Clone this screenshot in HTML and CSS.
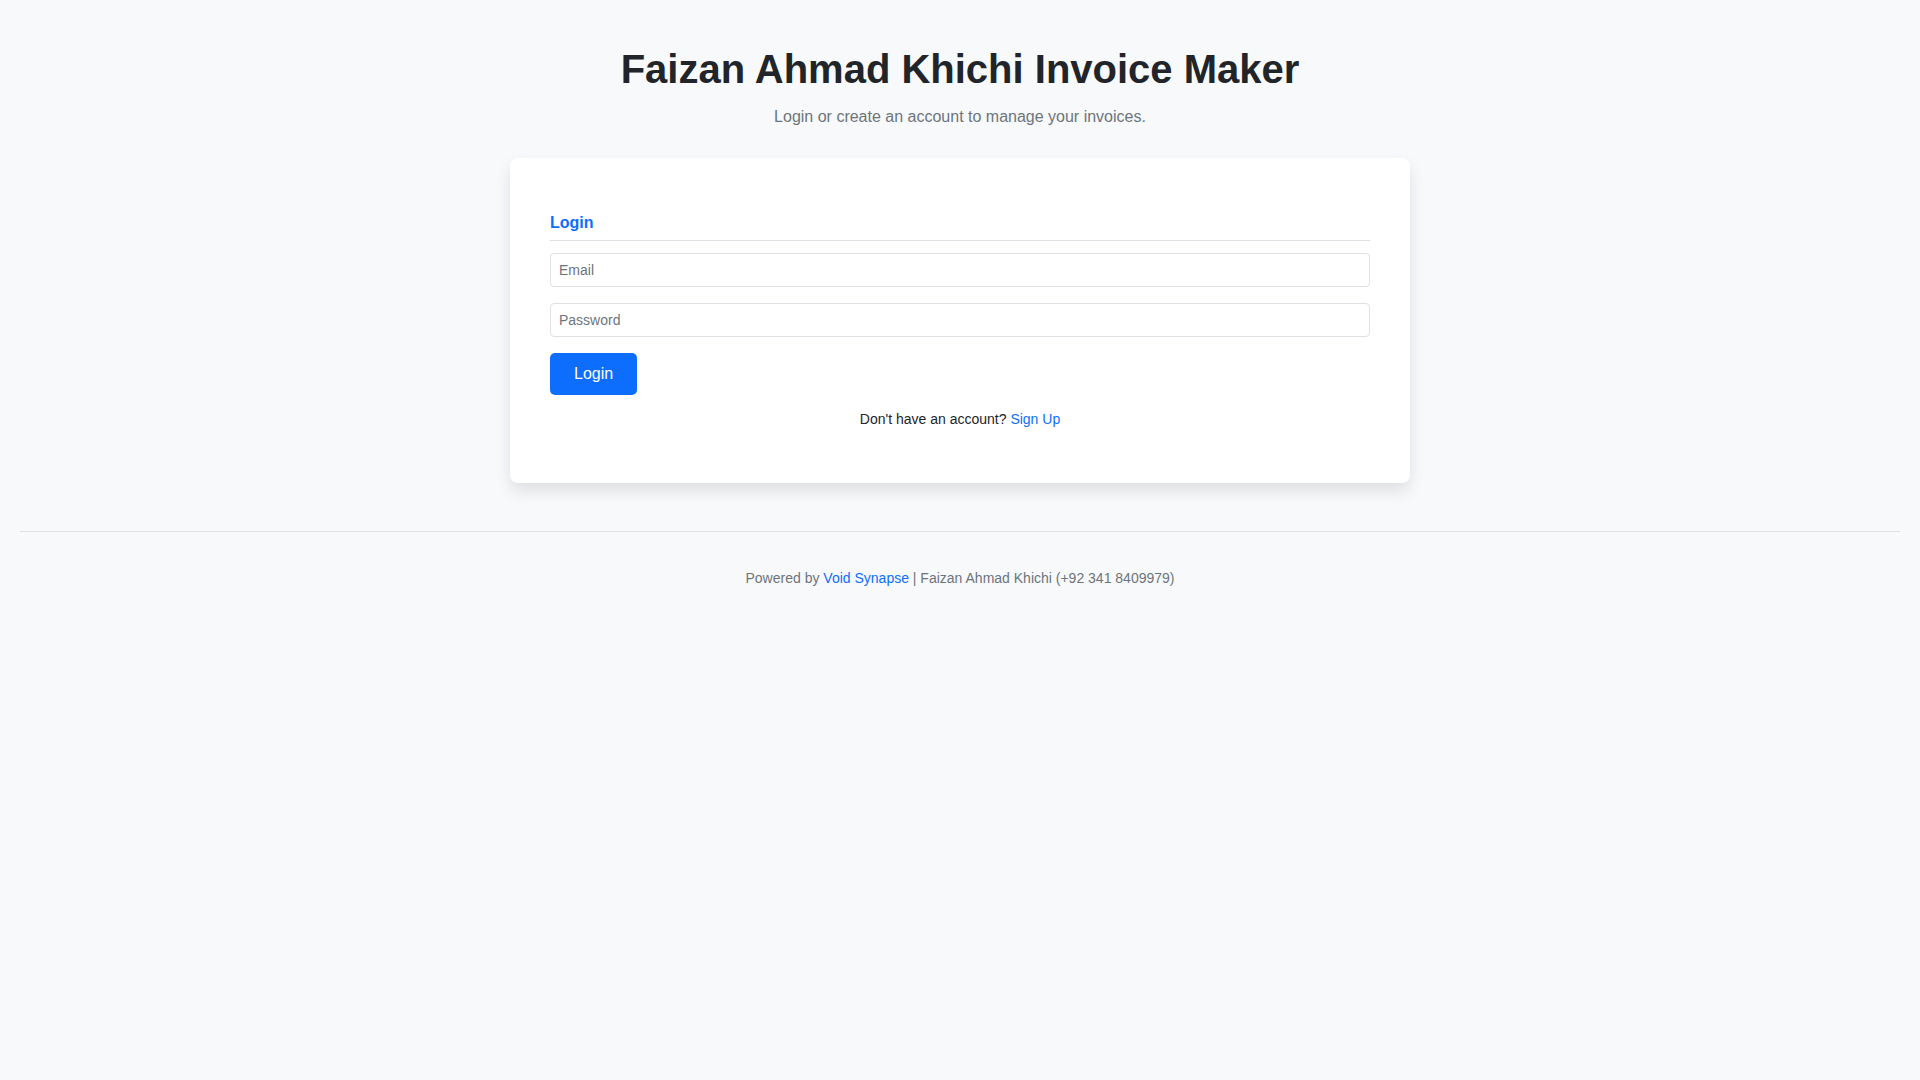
FILE: index.html
```html
<!DOCTYPE html>
<html lang="en">
<head>
<meta charset="utf-8">
<title>Faizan Ahmad Khichi Invoice Maker</title>
<link rel="stylesheet" href="styles.css">
</head>
<body>
  <header class="page-header">
    <h1 class="title">Faizan Ahmad Khichi Invoice Maker</h1>
    <p class="subtitle">Login or create an account to manage your invoices.</p>
  </header>
  <main class="main">
    <section class="card">
      <h2 class="card-title">Login</h2>
      <form class="form">
        <input class="field" type="email" placeholder="Email">
        <input class="field" type="password" placeholder="Password">
        <div class="actions">
          <button class="btn" type="button">Login</button>
        </div>
      </form>
      <p class="switch">Don't have an account? <a class="link" href="#">Sign Up</a></p>
    </section>
  </main>
  <footer class="footer">
    <hr class="divider">
    <p class="credits">Powered by <a class="link" href="#">Void Synapse</a> | Faizan Ahmad Khichi (+92 341 8409979)</p>
  </footer>
</body>
</html>
```

FILE: styles.css
```css
* { box-sizing: border-box; }

html, body {
  margin: 0;
  padding: 0;
}

body {
  background: #f8f9fa;
  color: #212529;
  font-family: "Liberation Sans", Arial, sans-serif;
  font-size: 16px;
  line-height: 1.5;
}

.page-header {
  padding-top: 45px;
  text-align: center;
}

.title {
  margin: 0 0 12px;
  font-size: 40px;
  font-weight: 700;
  line-height: 1.2;
  color: #212529;
}

.subtitle {
  margin: 0;
  font-size: 16px;
  line-height: 24px;
  color: #6c757d;
}

.main {
  display: flex;
  justify-content: center;
  padding-top: 29px;
}

.card {
  width: 900px;
  background: #ffffff;
  border-radius: 8px;
  box-shadow: 0 0.5rem 1rem rgba(0, 0, 0, 0.1);
  padding: 55px 40px 53px;
}

.card-title {
  margin: 0 0 12px;
  padding-bottom: 8px;
  border-bottom: 1px solid #dee2e6;
  font-size: 16px;
  font-weight: 700;
  line-height: 1.2;
  color: #0d6efd;
}

.form {
  display: flex;
  flex-direction: column;
  gap: 16px;
}

.field {
  display: block;
  width: 100%;
  height: 34px;
  padding: 8px;
  border: 1px solid #dee2e6;
  border-radius: 4px;
  background: #fff;
  font-family: "Liberation Sans", Arial, sans-serif;
  font-size: 14px;
  color: #212529;
  outline: none;
}

.field::placeholder {
  color: #6c757d;
}

.actions {
  display: flex;
}

.btn {
  height: 42px;
  padding: 9px 24px;
  border: none;
  border-radius: 5px;
  background: #0d6efd;
  color: #ffffff;
  font-family: "Liberation Sans", Arial, sans-serif;
  font-size: 16px;
  line-height: 24px;
  cursor: pointer;
}

.switch {
  margin: 14px 0 0;
  text-align: center;
  font-size: 14px;
  line-height: 21px;
  color: #212529;
}

.link {
  color: #0d6efd;
  text-decoration: none;
}

.footer {
  padding: 48px 20px 0;
}

.divider {
  margin: 0;
  border: 0;
  border-top: 1px solid #dee2e6;
}

.credits {
  margin: 36px 0 0;
  text-align: center;
  font-size: 14px;
  line-height: 21px;
  color: #6c757d;
}
```
